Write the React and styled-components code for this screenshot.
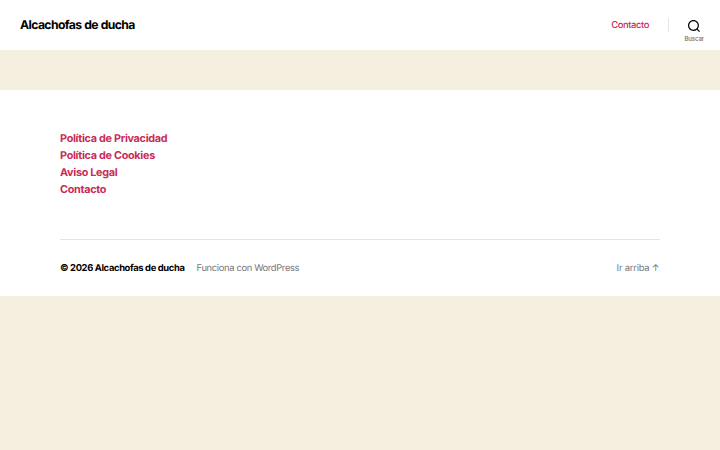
import styled, { createGlobalStyle } from "styled-components";

const links = [
  "Política de Privacidad",
  "Política de Cookies",
  "Aviso Legal",
  "Contacto",
];

const App = () => {
  return (
    <>
      <GlobalStyle />
      <Header>
        <Title href="#">Alcachofas de ducha</Title>
        <HeaderRight>
          <NavLink href="#">Contacto</NavLink>
          <SearchWrapper>
            <SearchButton>
              <svg width="12" height="12" viewBox="0 0 23 23">
                <path
                  d="M38.710696,48.0601792 L43,52.3494831 L41.3494831,54 L37.0601792,49.710696 C35.2632422,51.1481185 32.9839107,52.0076499 30.5038249,52.0076499 C24.7027226,52.0076499 20,47.3049272 20,41.5038249 C20,35.7027226 24.7027226,31 30.5038249,31 C36.3049272,31 41.0076499,35.7027226 41.0076499,41.5038249 C41.0076499,43.9839107 40.1481185,46.2632422 38.710696,48.0601792 Z M36.3875844,47.1716785 C37.8030221,45.7026647 38.6734666,43.7048964 38.6734666,41.5038249 C38.6734666,36.9918565 35.0157934,33.3341833 30.5038249,33.3341833 C25.9918565,33.3341833 22.3341833,36.9918565 22.3341833,41.5038249 C22.3341833,46.0157934 25.9918565,49.6734666 30.5038249,49.6734666 C32.7048964,49.6734666 34.7026647,48.8030221 36.1716785,47.3875844 C36.2023931,47.347638 36.2360451,47.3092237 36.2726343,47.2726343 C36.3092237,47.2360451 36.347638,47.2023931 36.3875844,47.1716785 Z"
                  transform="translate(-20 -31)"
                />
              </svg>
              <span>Buscar</span>
            </SearchButton>
          </SearchWrapper>
        </HeaderRight>
      </Header>
      <Widgets>
        <ul>
          {links.map((link) => (
            <li key={link}>
              <a href="#">{link}</a>
            </li>
          ))}
        </ul>
      </Widgets>
      <Footer>
        <Copyright>© 2026 Alcachofas de ducha</Copyright>
        <Powered>Funciona con WordPress</Powered>
        <ToTop href="#">Ir arriba ↑</ToTop>
      </Footer>
    </>
  );
};

const GlobalStyle = createGlobalStyle`
  * {
    box-sizing: border-box;
  }
  body {
    margin: 0;
    background: #f5efe0;
    color: #000;
    font-family: Inter, sans-serif;
    text-rendering: geometricPrecision;
  }
  a {
    text-decoration: none;
  }
`;
const Header = styled.header`
  height: 50px;
  padding-left: 20px;
  display: flex;
  align-items: center;
  justify-content: space-between;
  background: #fff;
`;
const Title = styled.a`
  color: #000;
  font-size: 12.2px;
  font-weight: 700;
  line-height: 16px;
  letter-spacing: -0.6px;
  word-spacing: 0.4px;
`;
const HeaderRight = styled.div`
  display: flex;
  align-items: center;
`;
const NavLink = styled.a`
  color: #c92a56;
  font-size: 9.4px;
  font-weight: 450;
  letter-spacing: -0.4px;
  margin-right: 19px;
`;
const SearchWrapper = styled.div`
  width: 52px;
  height: 50px;
  display: flex;
  align-items: center;
  &::before {
    content: "";
    width: 1px;
    height: 14px;
    background: #e4e4e4;
  }
`;
const SearchButton = styled.button`
  flex: 1;
  height: 50px;
  padding: 20px 0.6px 0 0;
  border: none;
  background: none;
  display: flex;
  flex-direction: column;
  align-items: center;
  color: #000;
  font-family: inherit;
  letter-spacing: -0.1px;
  span {
    margin-top: 3px;
    color: #6d6d6d;
    font-size: 6px;
    font-weight: 500;
    line-height: 7px;
  }
`;
const Widgets = styled.aside`
  margin-top: 40px;
  padding: 38px 60px 0;
  background: #fff;
  ul {
    height: 112px;
    margin: 0;
    padding: 0;
    list-style: none;
    border-bottom: 1px solid #e4e4e4;
  }
  li {
    height: 17.1px;
    line-height: 17.1px;
  }
  a {
    color: #c92a56;
    font-size: 10.8px;
    font-weight: 700;
    letter-spacing: -0.28px;
  }
`;
const Footer = styled.footer`
  height: 56px;
  padding: 0 60px;
  display: flex;
  align-items: center;
  background: #fff;
  font-size: 9.4px;
  letter-spacing: -0.35px;
`;
const Copyright = styled.p`
  margin: 0;
  font-weight: 700;
`;
const Powered = styled.p`
  margin: 0 0 0 12px;
  color: #777;
`;
const ToTop = styled.a`
  margin-left: auto;
  padding-right: 0.5px;
  color: #777;
  letter-spacing: -0.2px;
`;
export default App;
